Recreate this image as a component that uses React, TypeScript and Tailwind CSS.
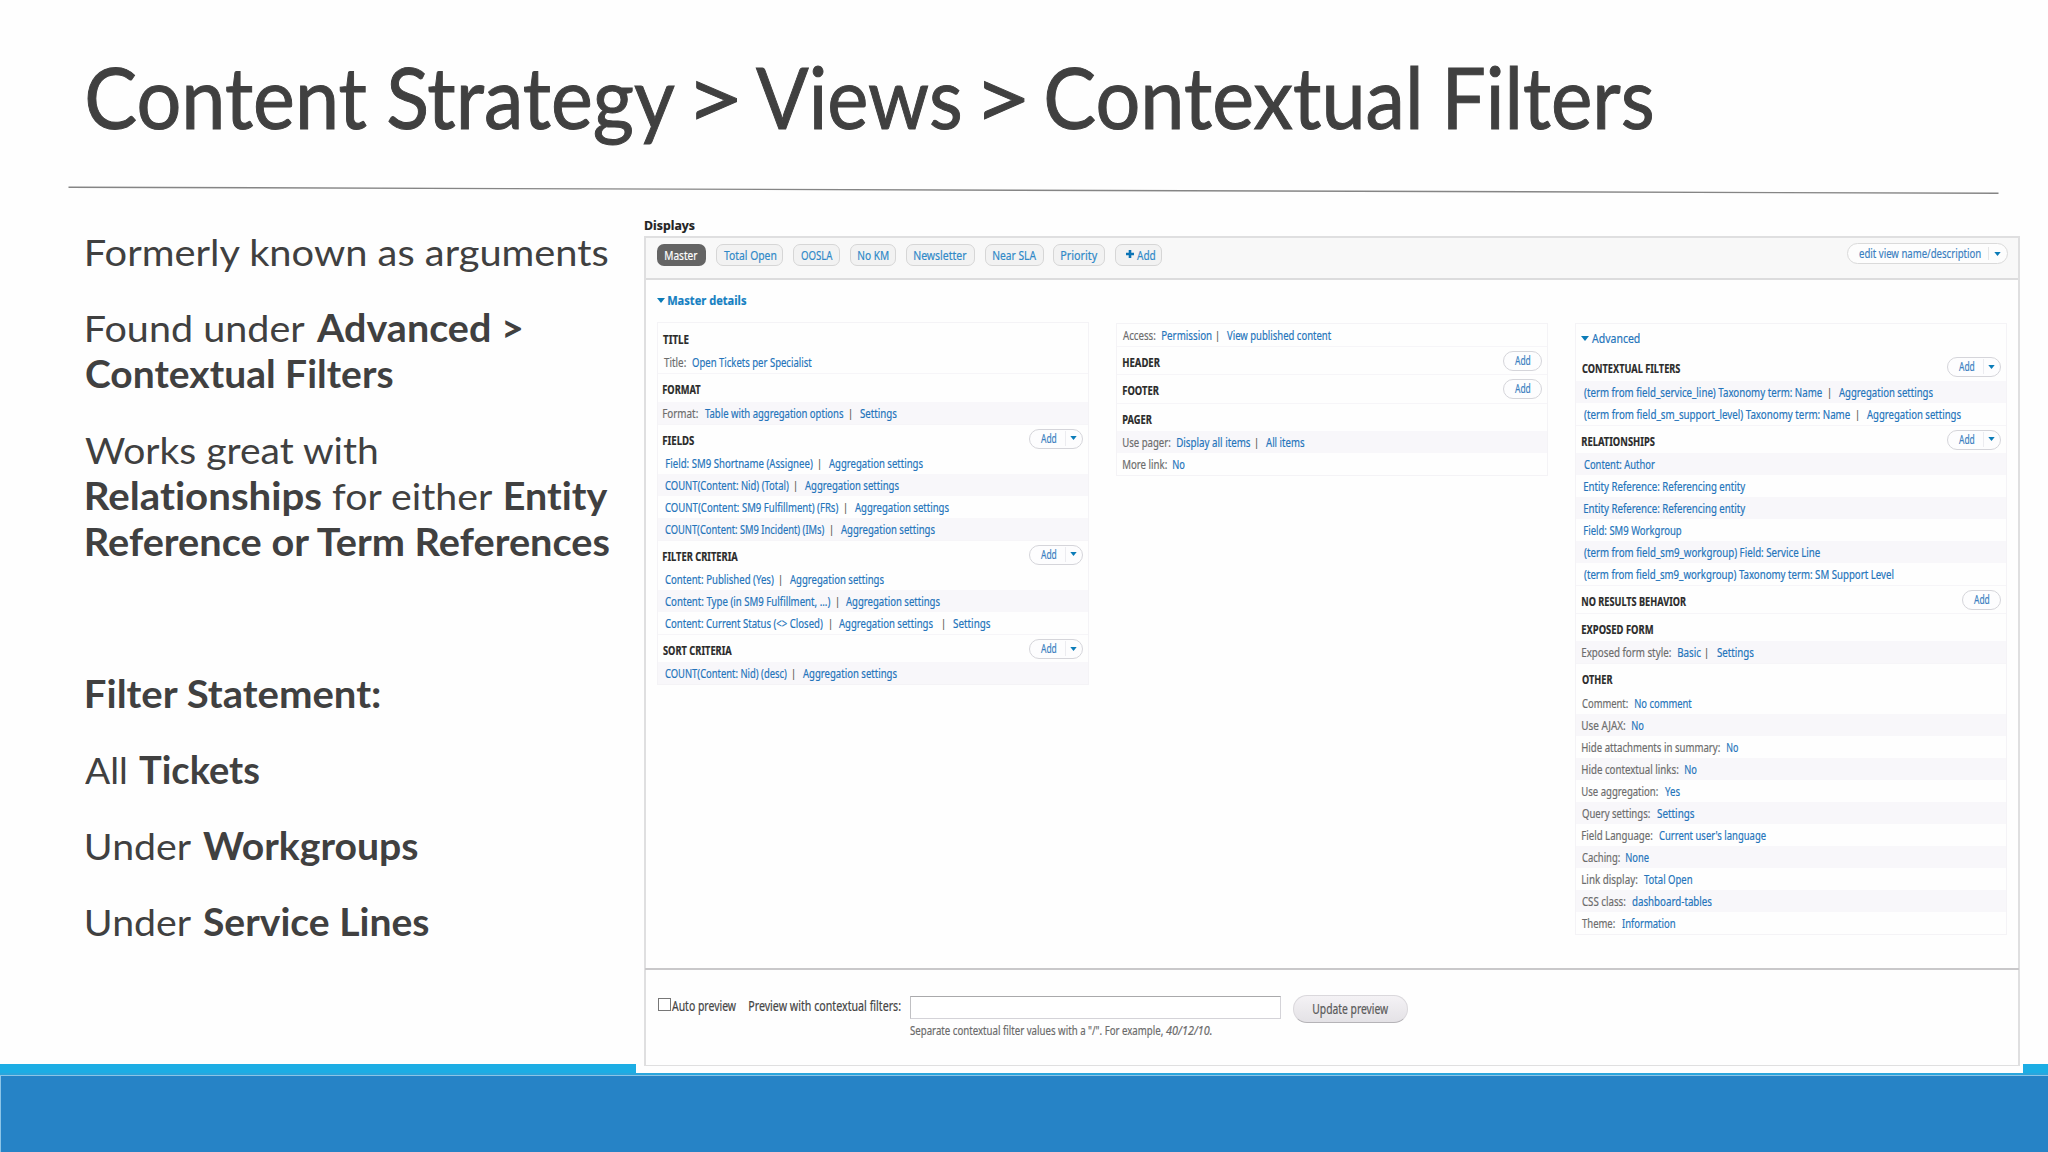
import React, { useLayoutEffect, useRef, useState } from "react";

/* Text set to an exact ink width by condensing the face horizontally. */
function Fit({ w, ml = 0, className = "", children }: { w: number; ml?: number; className?: string; children: string }) {
  const ref = useRef<HTMLSpanElement>(null);
  const [t, setT] = useState("none");
  useLayoutEffect(() => {
    const el = ref.current;
    const ctx = document.createElement("canvas").getContext("2d");
    if (!el || !ctx) return;
    const cs = getComputedStyle(el);
    ctx.font = `${cs.fontStyle} ${cs.fontWeight} ${cs.fontSize} ${cs.fontFamily}`;
    ctx.letterSpacing = "0.01px";
    const m = ctx.measureText(children);
    const s = w / (m.actualBoundingBoxLeft + m.actualBoundingBoxRight);
    setT(`translateX(${m.actualBoundingBoxLeft * s}px) scaleX(${s})`);
  }, [w, children]);
  return (
    <span className={`block shrink-0 ${className}`} style={{ width: w, marginLeft: ml }}>
      <span ref={ref} className="inline-block origin-left whitespace-pre tracking-[0.01px]" style={{ transform: t }}>
        {children}
      </span>
    </span>
  );
}

type Seg = [string, number, number, string?];

/* A run of text pieces, each given by its left and right edge. */
function Run({ segs, from }: { segs: Seg[]; from: number }) {
  return (
    <>
      {segs.map(([text, a, b, cls], i) => (
        <Fit key={i} w={b - a} ml={a - (i ? segs[i - 1][2] : from)} className={cls ?? "text-[#2474bb]"}>
          {text}
        </Fit>
      ))}
    </>
  );
}

const G = "text-[#6c6c6c]";
const bar = (x: number): Seg => ["|", x - 0.3, x + 1, "text-[#555] font-bold text-[10px]"];
const agg = (x: number): Seg => ["Aggregation settings", x, x + 94];

function Caret({ className }: { className: string }) {
  return (
    <svg viewBox="0 0 8 5" className={`block shrink-0 fill-[#0b7cb8] ${className}`}>
      <path d="M0 0h8L4 5z" />
    </svg>
  );
}

function AddButton({ split }: { split?: boolean }) {
  return (
    <div className="mt-[4px] flex h-[20px] rounded-full border-[1.5px] border-[#d5d5da] bg-[#fdfdfe] pl-[11px] text-[12px] leading-[18px]">
      <Fit w={15.5} className="text-[#3a7fc1]">Add</Fit>
      {split ? (
        <div className="mt-px ml-[9px] flex h-[15px] w-[17px] items-center border-l border-[#ececf0] pl-[4px]">
          <Caret className="h-[4px] w-[7px]" />
        </div>
      ) : (
        <div className="w-[11px]" />
      )}
    </div>
  );
}

type Item =
  | { h: string; a: number; b: number; btn?: "add" | "split" }
  | { r: Seg[]; band?: boolean };

function Column({ left, items, className = "", children }: { left: number; items: Item[]; className?: string; children?: React.ReactNode }) {
  return (
    <div className={`w-[432px] self-start border border-[#f4f3f6] ${className}`}>
      {children}
      {items.map((it, i) =>
        "h" in it ? (
          <div key={i} className={`flex h-[28.3px] justify-between pr-[5px] ${i ? "border-t border-[#f6f5f8]" : "border-t border-transparent"}`}>
            <div className="flex pt-[4px] text-[12.5px] font-bold leading-[23px]">
              <Run from={left} segs={[[it.h, it.a, it.b, "text-[#2a2a2a]"]]} />
            </div>
            {it.btn && <AddButton split={it.btn === "split"} />}
          </div>
        ) : (
          <div key={i} className={`flex h-[22px] text-[12.5px] leading-[23px] ${it.band ? "bg-[#f8f7fa]" : ""}`}>
            <Run from={left} segs={it.r} />
          </div>
        ),
      )}
    </div>
  );
}

const col1: Item[] = [
  { h: "TITLE", a: 663, b: 689 },
  { r: [["Title:", 663.5, 685.5, G], ["Open Tickets per Specialist", 692, 812]] },
  { h: "FORMAT", a: 663, b: 700.5 },
  { band: true, r: [["Format:", 663, 698, G], ["Table with aggregation options", 705, 843.5], bar(850), ["Settings", 860, 897]] },
  { h: "FIELDS", a: 663, b: 694.5, btn: "split" },
  { r: [["Field: SM9 Shortname (Assignee)", 665.5, 812.5], bar(819), agg(829)] },
  { band: true, r: [["COUNT(Content: Nid) (Total)", 665, 789], bar(795.5), agg(805.5)] },
  { r: [["COUNT(Content: SM9 Fulfillment) (FRs)", 665, 838.5], bar(845), agg(855)] },
  { band: true, r: [["COUNT(Content: SM9 Incident) (IMs)", 665, 824.5], bar(831), agg(841)] },
  { h: "FILTER CRITERIA", a: 663, b: 738, btn: "split" },
  { r: [["Content: Published (Yes)", 665, 774], bar(780.5), agg(790.5)] },
  { band: true, r: [["Content: Type (in SM9 Fulfillment, ...)", 665, 830.5], bar(837), agg(846.5)] },
  { r: [["Content: Current Status (<> Closed)", 665, 823], bar(830), agg(839.5), bar(943.5), ["Settings", 953.5, 991]] },
  { h: "SORT CRITERIA", a: 663, b: 732, btn: "split" },
  { band: true, r: [["COUNT(Content: Nid) (desc)", 665, 787], bar(793.5), agg(803.5)] },
];

const col2: Item[] = [
  { r: [["Access:", 1122.5, 1155, G], ["Permission", 1161.5, 1211], bar(1217), ["View published content", 1227, 1331.5]] },
  { h: "HEADER", a: 1122.5, b: 1160, btn: "add" },
  { h: "FOOTER", a: 1122.5, b: 1159, btn: "add" },
  { h: "PAGER", a: 1122.5, b: 1152 },
  { band: true, r: [["Use pager:", 1122.5, 1170, G], ["Display all items", 1176.5, 1250], bar(1256), ["All items", 1266, 1304.5]] },
  { r: [["More link:", 1122.5, 1166.5, G], ["No", 1173, 1184.5]] },
];

const pair = (label: string, end: number, value: string, a: number, b: number, band = false): Item => ({
  band,
  r: [[label, 1582, end, G], [value, a, b]],
});

const col3: Item[] = [
  { h: "CONTEXTUAL FILTERS", a: 1582, b: 1680.5, btn: "split" },
  { band: true, r: [["(term from field_service_line) Taxonomy term: Name", 1584.3, 1822.5], bar(1829), agg(1839)] },
  { r: [["(term from field_sm_support_level) Taxonomy term: Name", 1584.3, 1850.5], bar(1857), agg(1867)] },
  { h: "RELATIONSHIPS", a: 1582, b: 1655, btn: "split" },
  { band: true, r: [["Content: Author", 1584.3, 1655]] },
  { r: [["Entity Reference: Referencing entity", 1584.3, 1746]] },
  { band: true, r: [["Entity Reference: Referencing entity", 1584.3, 1746]] },
  { r: [["Field: SM9 Workgroup", 1584.3, 1681.5]] },
  { band: true, r: [["(term from field_sm9_workgroup) Field: Service Line", 1584.3, 1820.5]] },
  { r: [["(term from field_sm9_workgroup) Taxonomy term: SM Support Level", 1584.3, 1894]] },
  { h: "NO RESULTS BEHAVIOR", a: 1582, b: 1686.5, btn: "add" },
  { h: "EXPOSED FORM", a: 1582, b: 1653 },
  { band: true, r: [["Exposed form style:", 1582, 1671, G], ["Basic", 1677.5, 1700.5], bar(1706.5), ["Settings", 1717, 1754]] },
  { h: "OTHER", a: 1582, b: 1613 },
  pair("Comment:", 1628, "No comment", 1634.5, 1691.5),
  pair("Use AJAX:", 1625.5, "No", 1632, 1643.5, true),
  pair("Hide attachments in summary:", 1720, "No", 1727, 1738),
  pair("Hide contextual links:", 1678.5, "No", 1685, 1696.5, true),
  pair("Use aggregation:", 1658, "Yes", 1664.5, 1679.5),
  pair("Query settings:", 1650, "Settings", 1656.5, 1694, true),
  pair("Field Language:", 1652.5, "Current user's language", 1658.5, 1765.5),
  pair("Caching:", 1620, "None", 1626, 1649, true),
  pair("Link display:", 1637.5, "Total Open", 1644, 1692),
  pair("CSS class:", 1625.5, "dashboard-tables", 1632, 1712, true),
  pair("Theme:", 1615, "Information", 1622, 1675),
];

const tabs: [string, number, number, number, number][] = [
  ["Total Open", 716, 782.5, 723.5, 775.5],
  ["OOSLA", 793, 840, 801, 833],
  ["No KM", 850, 896, 858, 888.5],
  ["Newsletter", 906, 975, 914, 967],
  ["Near SLA", 985, 1043.5, 992.5, 1036],
  ["Priority", 1053, 1105, 1060.5, 1097],
];

const T = "[-webkit-text-stroke:1px_#404040]";
const title: Seg[] = [
  ["Content", 87.5, 366, T],
  ["Strategy", 388, 675, T],
  [">", 695.5, 736.5, T],
  ["Views", 756, 960, T],
  [">", 983.5, 1024, T],
  ["Contextual", 1046.5, 1417.5, T],
  ["Filters", 1448, 1652, T],
];

const B = "font-bold";
const N = "font-normal";
const bullets: Seg[][][] = [
  [[["Formerly known as arguments", 86.5, 608, N]]],
  [
    [["Found under", 86.5, 304.5, N], ["Advanced >", 315.5, 520.5, B]],
    [["Contextual Filters", 86, 393, B]],
  ],
  [
    [["Works great with", 85, 377.5, N]],
    [["Relationships", 86.5, 321, B], ["for either", 332, 493.5, N], ["Entity", 506, 607.5, B]],
    [["Reference or Term References", 86.5, 611, B]],
  ],
  [[]],
  [[["Filter Statement:", 86.5, 380, B]]],
  [[["All", 85, 126, N], ["Tickets", 138.5, 259, B]]],
  [[["Under", 86.5, 191, N], ["Workgroups", 203, 418, B]]],
  [[["Under", 86.5, 191, N], ["Service Lines", 203, 429, B]]],
];

export default function App() {
  return (
    <div className="flex h-[1152px] w-[2048px] flex-col overflow-hidden bg-[#fefefe]">
      <header className="h-[220px] shrink-0">
        <h1 className="flex h-[186px] pt-[46px] font-['Lato',sans-serif] text-[85px] leading-[100px] text-[#404040]">
          <Run from={0} segs={title} />
        </h1>
        <svg className="ml-[68px] block h-[8px] w-[1931px]" viewBox="0 0 1931 8">
          <path d="M0.5 1.2L1930.5 7.3" stroke="#858585" strokeWidth="1.4" />
        </svg>
      </header>

      <div className="flex h-[846px] shrink-0">
        <div className="flex w-[644px] shrink-0 flex-col gap-[30px] pt-[9px] font-['Lato',sans-serif] text-[37.5px] leading-[46px] text-[#404040]">
          {bullets.map((p, i) => (
            <div key={i}>
              {p.map((line, j) => (
                <div key={j} className="flex h-[46px]">
                  <Run from={0} segs={line} />
                </div>
              ))}
            </div>
          ))}
        </div>

        <section className="flex w-[1376px] shrink-0 flex-col font-['Noto_Sans','Open_Sans',sans-serif] [-webkit-text-stroke:0.2px]">
          <div className="flex h-[16px] pl-px text-[13px] font-bold leading-[11px] text-[#222]">
            <Fit w={49.5}>Displays</Fit>
          </div>
          <div className="flex grow flex-col border-2 border-b border-[#dfdfe0] bg-[#fefefe]">
            <div className="flex h-[42px] shrink-0 border-b-2 border-[#dcdcdd] bg-[#f8f8f8] pt-[6px] text-[13px] leading-[20px]">
              <div className="ml-[11px] flex h-[22px] w-[49px] rounded-[7px] bg-[#646464] pt-[1px] pl-[8px] text-white">
                <Fit w={33}>Master</Fit>
              </div>
              {tabs.map(([t, l, r, a, b], i) => (
                <div
                  key={t}
                  className="flex h-[22px] rounded-[7px] border-[1.5px] border-[#d6d6d6] bg-[#f2f2f2] text-[#2f89c8]"
                  style={{ width: r - l, marginLeft: l - (i ? tabs[i - 1][2] : 706) }}
                >
                  <Fit w={b - a} ml={a - l - 1}>{t}</Fit>
                </div>
              ))}
              <div className="ml-[10px] flex h-[22px] w-[47px] rounded-[7px] border-[1.5px] border-[#d6d6d6] bg-[#f2f2f2] pl-[10px] text-[#2f89c8]">
                <svg viewBox="0 0 8 8" className="mt-[5px] mr-[2.500px] h-[8px] w-[8px] fill-[#0b73b5]">
                  <path d="M2.7 0h2.6v2.7H8v2.6H5.3V8H2.7V5.3H0V2.7h2.7z" />
                </svg>
                <Fit w={18}>Add</Fit>
              </div>
              <div className="-mt-px mr-[10px] ml-auto flex h-[21px] w-[161px] rounded-full border-[1.5px] border-[#dadada] bg-[#fdfdfd] pl-[11px] leading-[18px] text-[#3a7fc1]">
                <Fit w={121.5}>edit view name/description</Fit>
                <div className="mt-[3px] ml-[7.500px] flex h-[13px] items-center border-l border-[#e6e6e6] pl-[5px]">
                  <Caret className="h-[4px] w-[7px]" />
                </div>
              </div>
            </div>

            <div className="flex h-[43px] shrink-0 pt-[18px] pl-[11px] text-[13px] font-bold leading-[20px] text-[#1580c2]">
              <Caret className="mr-[3px] h-[5px] w-[8px] self-start" />
              <div className="-mt-[8px]">
                <Fit w={78}>Master details</Fit>
              </div>
            </div>

            <div className="flex h-[645px] shrink-0 pl-[11px]">
              <Column left={658} items={col1} className="-mt-px" />
              <div className="w-[27px]" />
              <Column left={1117} items={col2} />
              <div className="w-[27px]" />
              <Column left={1576} items={col3}>
                <div className="flex h-[28.3px] pl-[4.500px] text-[13px] leading-[29px] text-[#2474bb]">
                  <Caret className="mt-[12px] mr-[3.500px] h-[5px] w-[8px]" />
                  <Fit w={47.5}>Advanced</Fit>
                </div>
              </Column>
            </div>

            <div className="-mx-px flex grow border-t-2 border-[#c9c8ca] pl-[13px] text-[14px] leading-[20px] text-[#444]">
              <div className="mt-[28px] h-[13px] w-[13px] border border-[#777] bg-white" />
              <div className="mt-[26px] flex">
                <Fit w={64} ml={1}>Auto preview</Fit>
                <Fit w={151.5} ml={13}>Preview with contextual filters:</Fit>
              </div>
              <div className="mt-[26px] ml-[9px]">
                <div className="h-[23px] w-[371px] border border-[#d4d3d8] border-t-[#a9a9ab] border-l-[#c0c0c3] bg-white" />
                <div className="flex pt-[2px] text-[12.5px] text-[#6a6a6a]">
                  <Fit w={253}>{'Separate contextual filter values with a "/". For example,'}</Fit>
                  <Fit w={45.5} ml={3} className="italic">40/12/10.</Fit>
                </div>
              </div>
              <div className="mt-[25px] ml-[12px] flex h-[28px] w-[115px] rounded-full border border-[#dad8dc] border-b-[#b5b3b7] bg-gradient-to-b from-[#f4f2f5] to-[#e4e2e6] pt-[3px] pl-[19px] text-[13.5px] text-[#5a5a5a]">
                <Fit w={75.5}>Update preview</Fit>
              </div>
            </div>
          </div>
        </section>
      </div>

      <div className="-mt-[2px] flex h-[10px] shrink-0 justify-between">
        <div className="w-[636px] bg-[#1cade4]" />
        <div className="w-[25px] bg-[#1cade4]" />
      </div>
      <div className="-mt-px h-[2px] shrink-0 bg-[#2aa5dc]" />
      <div className="grow border-t border-l border-[#8cc4e6] bg-[#2683c6]" />
    </div>
  );
}
